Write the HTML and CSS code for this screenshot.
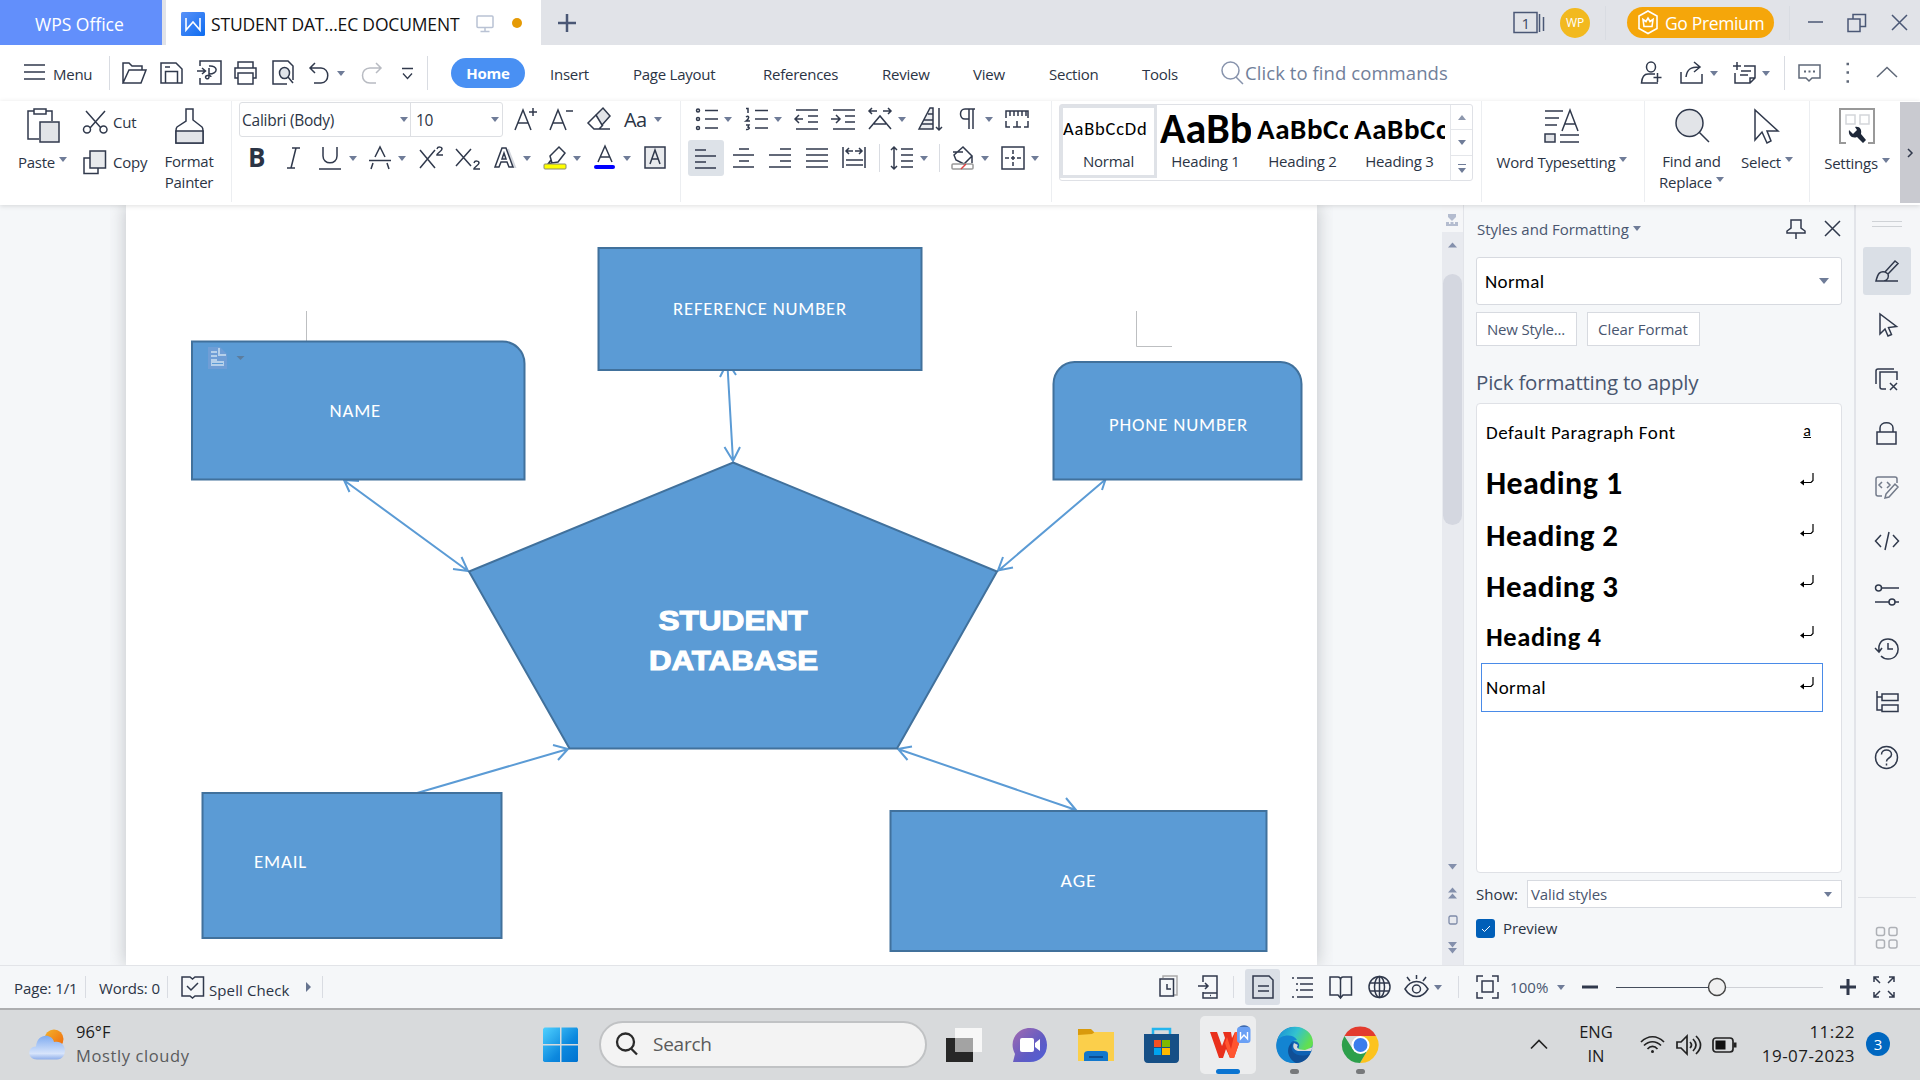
FILE: index.html
```html
<!DOCTYPE html>
<html lang="en">
<head>
<meta charset="utf-8">
<title>WPS Office - STUDENT DATABASE</title>
<link rel="stylesheet" href="styles.css">
</head>
<body>
<div class="app">

<header class="titlebar">
  <div class="tab-home">WPS Office</div>
  <div class="tab-doc">
    <svg class="logo" width="24" height="24" viewBox="0 0 24 24"><defs><linearGradient id="wl" x1="0" y1="0" x2="1" y2="1"><stop offset="0" stop-color="#5a92f8"/><stop offset="1" stop-color="#0d6cf0"/></linearGradient></defs><rect width="24" height="24" rx="1.5" fill="url(#wl)"/><path d="M5 6v12l7-8 7 8V6" fill="none" stroke="#fff" stroke-width="1.6"/></svg>
    <span class="doc-name">STUDENT DAT...EC DOCUMENT</span>
    <svg class="i monitor" width="18" height="18" viewBox="0 0 18 18"><rect x="1" y="1" width="16" height="11.500" rx="1"/><path d="M9 12.500v4M4.500 16.500h9"/></svg>
    <span class="dirty"></span>
  </div>
  <svg class="i plus" width="18" height="18" viewBox="0 0 18 18"><path d="M9 0v18M0 9h18"/></svg>
  <div class="title-right">
    <svg class="i slate" width="32" height="24" viewBox="0 0 32 24"><rect x="1" y="1.500" width="23" height="20"/><path d="M26.500 3v18M30.500 6v14"/><text x="8.500" y="17.500">1</text></svg>
    <span class="avatar">WP</span><span class="vsep"></span>
    <span class="premium"><svg class="i" width="22" height="25" viewBox="0 0 22 25"><path d="M11 1l9 5v12.500l-9 5-9-5V6zM6 9.500l3 2L11 8l2 3.500 3-2-1 7H7z"/></svg>Go Premium</span>
    <span class="vsep"></span>
    <svg class="i slate" width="16" height="16" viewBox="0 0 16 16"><path d="M0 7h15"/></svg>
    <svg class="i slate" width="20" height="20" viewBox="0 0 20 20"><rect x="0" y="6" width="12" height="12.500"/><path d="M5 6V1.500h12.500v12H12"/></svg>
    <svg class="i slate" width="17" height="17" viewBox="0 0 17 17"><path d="M1 1l15 15M16 1L1 16"/></svg>
  </div>
</header>

<nav class="menubar">
  <svg class="i" width="22" height="18" viewBox="0 0 22 18"><path d="M1 1h21M1 8h21M1 15h21"/></svg>
  <span>Menu</span><span class="vsep"></span>
  <svg class="i" width="26" height="24" viewBox="0 0 26 24"><path d="M1 22V2h6l3 3h10v4M1 22l6-13h17l-5 13z"/></svg>
  <svg class="i" width="24" height="24" viewBox="0 0 24 24"><path d="M1 2h15l6 6v14H1zM5.500 22V10.500h12V22M5 6h5"/></svg>
  <svg class="i" width="25" height="26" viewBox="0 0 25 26"><path d="M3 6V1h21v23H3v-6M0 11h8M5 8l3.500 3L5 14M12 6c9-1 10 8 0 8v-3M12 8v9c0 3-5 2-3-1 2-1 5-1 5 1"/></svg>
  <svg class="i" width="24" height="24" viewBox="0 0 24 24"><path d="M4 7V1h15v6M4 17H1V7h21v10h-3"/><rect x="4" y="12" width="15" height="11"/></svg>
  <svg class="i" width="24" height="26" viewBox="0 0 24 26"><path d="M15 24H1V1h15l5 5v14"/><ellipse cx="12.500" cy="13" rx="5" ry="5.500" fill="#dfe3e9"/><path d="M16 17l5 6"/></svg>
  <svg class="i" width="22" height="24" viewBox="0 0 22 24"><path d="M6 2L1 7l5 5M1 7h11c9 0 9 15 0 15H5"/></svg>
  <b class="caret"></b>
  <svg class="i faint" width="22" height="24" viewBox="0 0 22 24"><path d="M15 2l5 5-5 5M20 7H9C-1 7-1 22 9 22h6"/></svg>
  <svg class="i" width="14" height="14" viewBox="0 0 14 14"><path d="M0 2.500h11M1 7.500l4.500 5 4.500-5" stroke-width="1.3"/></svg>
  <span class="vsep"></span>
  <span class="home">Home</span><span>Insert</span><span>Page Layout</span><span>References</span><span>Review</span><span>View</span><span>Section</span><span>Tools</span>
  <svg class="i search-ic" width="24" height="24" viewBox="0 0 24 24"><circle cx="9.500" cy="9.500" r="8.500"/><path d="M15 16l7 7"/></svg>
  <span class="find">Click to find commands</span>
  <svg class="i" width="24" height="24" viewBox="0 0 24 24"><ellipse cx="11" cy="6" rx="4.500" ry="5"/><path d="M15 13H8c-4 0-6 3-6.500 9H18M17.500 12v9M13.500 16.500h8"/></svg>
  <svg class="i" width="25" height="24" viewBox="0 0 25 24"><path d="M1 11v11h21v-9M6 16C7 8 11 6 19 6M14 1l6 5-6 5"/></svg>
  <b class="caret"></b>
  <svg class="i" width="24" height="24" viewBox="0 0 24 24"><path d="M4 1v8M0 5h8M11 5h11v12l-5 5H2V12M17 22v-5h5M8 10h10M7 14h8"/></svg>
  <b class="caret"></b><span class="vsep"></span>
  <svg class="i soft" width="23" height="20" viewBox="0 0 23 20"><path d="M1 2h21v13H14l-3 3-3-3H1z"/><path d="M6 8.500h2M10.500 8.500h2M15 8.500h2" stroke-width="2"/></svg>
  <svg class="i soft" width="14" height="22" viewBox="0 0 14 22"><path d="M6.500 2h2.500M6.500 10.500h2.500M6.500 19.500h2.500" stroke-width="2.500"/></svg>
  <svg class="i soft" width="22" height="12" viewBox="0 0 22 12"><path d="M0 10L10 .5 20 10"/></svg>
</nav>

<section class="ribbon">
  <div class="group clipboard">
    <div class="big"><svg class="i" width="34" height="36" viewBox="0 0 34 36"><path d="M12 31H1V3h6M19 3h6v10"/><rect x="7" y="1" width="12" height="5"/><rect x="13" y="14" width="19" height="20" fill="#e2e4e8"/></svg><span>Paste<b class="caret"></b></span></div>
    <div class="stack">
      <span><svg class="i" width="25" height="24" viewBox="0 0 25 24"><path d="M3 1l15 17M22 1L7 18"/><circle cx="4" cy="19.500" r="3.500"/><circle cx="20.500" cy="19.500" r="3.500"/></svg>Cut</span>
      <span><svg class="i" width="25" height="25" viewBox="0 0 25 25"><path d="M7 8H1v15.500h14V18"/><rect x="7" y="1" width="15.500" height="17" fill="#e8eaed"/></svg>Copy</span>
    </div>
    <div class="big painter"><svg class="i" width="30" height="37" viewBox="0 0 30 37"><path d="M11 1h7v11l9 7c1 1 1 2 1 4v12H1V23c0-2 0-3 1-4l9-6z"/><path d="M1 23h27v12H1z" fill="#e2e4e8"/></svg><span>Format<br>Painter</span></div>
  </div>

  <div class="group font">
    <div class="row r-font1">
      <div class="fontbox"><span>Calibri (Body)</span><b class="caret"></b><i></i><span>10</span><b class="caret"></b></div>
      <svg class="i" width="24" height="24" viewBox="0 0 24 24"><path d="M0 23L8 3l8 20M3 16h10M18 1v8M14 5h8"/></svg>
      <svg class="i" width="25" height="24" viewBox="0 0 25 24"><path d="M0 23L8 3l8 20M3 16h10M16 4h7"/></svg>
      <svg class="i" width="26" height="24" viewBox="0 0 26 24"><path d="M9 8l7-7 7 8-8 9z" fill="#e2e4e8"/><path d="M9 8l-8 8 6 6h5l4-4M7 22h16"/></svg>
      <span class="glyph">Aa</span><b class="caret"></b>
    </div>
    <div class="row r-font2">
      <span class="bold">B</span>
      <svg class="i" width="14" height="24" viewBox="0 0 14 24"><path d="M4 2h8M-1 22h8M8 2L3 22"/></svg>
      <svg class="i" width="24" height="24" viewBox="0 0 24 24"><path d="M4 1v9c0 9 14 9 14 0V1M0 23h22"/></svg><b class="caret"></b>
      <svg class="i" width="23" height="24" viewBox="0 0 23 24"><path d="M6 11l5-10 5 10M0 14.500h22M4 17l-2 6M18 17l2 6"/></svg><b class="caret"></b>
      <svg class="i" width="25" height="24" viewBox="0 0 25 24"><path d="M1 4l15 18M16 4L1 22M18 3c1-3 5-2 5 0 0 2-5 4-5 6h6"/></svg>
      <svg class="i" width="26" height="24" viewBox="0 0 26 24"><path d="M1 3l15 17M16 3L1 20M19 17c1-3 5-2 5 0 0 2-5 4-5 6h6"/></svg>
      <svg class="i" width="22" height="24" viewBox="0 0 22 24"><path d="M13 3l7 18h-2" stroke="#d5d8de" stroke-width="2"/><path d="M0 21L7 2h4l7 19h-4l-2-5H6l-2 5zM7 13h4l-2-6z"/></svg><b class="caret"></b>
      <svg class="i" width="24" height="26" viewBox="0 0 24 26"><path d="M7 11l9-9 6 6-7 9-6 1zM7 11l2 7-4 1 3-4"/><rect x="1" y="19" width="22" height="5" rx="1" fill="#ff0" stroke="#8a8a70" stroke-width="1"/></svg><b class="caret"></b>
      <svg class="i" width="22" height="26" viewBox="0 0 22 26"><path d="M4 17l7-16 7 16M6 12h10"/><rect x="0" y="20" width="21" height="4" rx="2" fill="#00f" stroke="none"/></svg><b class="caret"></b>
      <svg class="i" width="22" height="24" viewBox="0 0 22 24"><rect x="0" y="1" width="20" height="21" fill="#e8eaed"/><path d="M5 18l5-14 5 14M7 13h6"/></svg>
    </div>
  </div>

  <div class="group para">
    <div class="row r-para1">
      <svg class="i" width="24" height="24" viewBox="0 0 24 24"><path d="M10 3.500h13M10 12h13M10 21h13"/><circle cx="3" cy="3.500" r="1.500"/><circle cx="3" cy="12" r="1.500"/><circle cx="3" cy="21" r="1.500"/></svg><b class="caret"></b>
      <svg class="i" width="24" height="24" viewBox="0 0 24 24"><path d="M10 3.500h13M10 12h13M10 21h13M1 1.500h2V6M1 10c3-2 4 1 0 4h4M1 18h3l-1 2c3 1 0 3-2 2.500"/></svg><b class="caret"></b>
      <svg class="i" width="25" height="24" viewBox="0 0 25 24"><path d="M2 3h22M14 9h10M14 15h10M2 22h22M1 12h8M5 8l-4 4 4 4"/></svg>
      <svg class="i" width="25" height="24" viewBox="0 0 25 24"><path d="M2 3h22M14 9h10M14 15h10M2 22h22M0 12h8M5 8l4 4-4 4"/></svg>
      <svg class="i" width="25" height="24" viewBox="0 0 25 24"><path d="M1 22L12 9l11 13M6 17h12M1 4h8M4 1L1 4l3 3M15 4h8M20 1l3 3-3 3"/></svg><b class="caret"></b>
      <svg class="i" width="25" height="25" viewBox="0 0 25 25"><path d="M1 22L12 1h3v21zM6 13h9M4 17h11M10 7h5" fill="#eceef1"/><path d="M21 1v22M18 20l3 3 3-3"/></svg>
      <svg class="i" width="17" height="24" viewBox="0 0 17 24"><path d="M9 12H5C-1 12-1 2 5 2h10M9 2v20M13 2v20"/></svg><b class="caret"></b>
      <svg class="i" width="25" height="20" viewBox="0 0 25 20"><path d="M1 9V2h22v7M5 2v5M9 2v5M13 2v5M17 2v5M21 2v5M1 12v6h4M8 18h8M12 12v6M23 12v6h-4"/></svg>
    </div>
    <div class="row r-para2">
      <span class="on"><svg class="i" width="23" height="22" viewBox="0 0 23 22"><path d="M1 2h11M1 8h21M1 14h11M1 20h21"/></svg></span>
      <svg class="i" width="23" height="22" viewBox="0 0 23 22"><path d="M6 2h10M0 8h21M6 14h10M0 20h21"/></svg>
      <svg class="i" width="23" height="22" viewBox="0 0 23 22"><path d="M11 2h11M0 8h22M11 14h11M0 20h22"/></svg>
      <svg class="i" width="23" height="22" viewBox="0 0 23 22"><path d="M0 2h22M0 8h22M0 14h22M0 20h22"/></svg>
      <svg class="i" width="25" height="24" viewBox="0 0 25 24"><path d="M1 1v21M23 1v21M4 5h7M7 2L4 5l3 3M13 5h7M17 2l3 3-3 3M4 14h17M4 19h17"/></svg>
      <span class="vsep"></span>
      <svg class="i" width="24" height="24" viewBox="0 0 24 24"><path d="M4 1v22M1 4l3-3 3 3M1 20l3 3 3-3M11 3h12M11 9h12M11 15h12M11 21h12"/></svg><b class="caret"></b>
      <span class="vsep"></span>
      <svg class="i" width="25" height="26" viewBox="0 0 25 26"><path d="M3 10l9-8 9 9-8 8-8-4zM2 7h10M21 11v7"/><rect x="1" y="19" width="21" height="5" rx="1" stroke="#999"/><path d="M10 24l5-5" stroke="#e04040"/></svg><b class="caret"></b>
      <svg class="i" width="24" height="24" viewBox="0 0 24 24"><rect x="1" y="1" width="22" height="22"/><path d="M12 4v16M4 12h16" stroke-dasharray="4 2"/></svg><b class="caret"></b>
    </div>
  </div>

  <div class="group styles">
    <div class="gallery">
      <div class="st sel"><span class="s0">AaBbCcDd</span><em>Normal</em></div>
      <div class="st"><span class="s1">AaBb</span><em>Heading 1</em></div>
      <div class="st"><span class="s2">AaBbCc</span><em>Heading 2</em></div>
      <div class="st"><span class="s2">AaBbCc</span><em>Heading 3</em></div>
      <div class="spin"><span><b class="caret up"></b></span><span><b class="caret"></b></span><span><i></i><b class="caret"></b></span></div>
    </div>
  </div>

  <div class="group word"><div class="big"><svg class="i" width="36" height="36" viewBox="0 0 36 36"><path d="M1 3h18M1 10h14M1 17h12"/><path d="M18 23L26 2l8 21M21 16h10"/><rect x="1" y="26" width="10" height="8" fill="#e2e4e8"/><path d="M16 27h19M16 34h19"/></svg><span>Word Typesetting<b class="caret"></b></span></div></div>

  <div class="group find-g">
    <div class="big two"><svg class="i" width="36" height="36" viewBox="0 0 36 36"><circle cx="14.500" cy="15" r="13.500" fill="#e2e4e8"/><path d="M24 24l10 10"/></svg><span>Find and<br>Replace<b class="caret"></b></span></div>
    <div class="big"><svg class="i" width="28" height="36" viewBox="0 0 28 36"><path d="M2 2v30l7-8 5 11 4-2-4-10h11z"/></svg><span>Select<b class="caret"></b></span></div>
  </div>

  <div class="group set-g"><div class="big"><svg class="i" width="37" height="37" viewBox="0 0 37 37"><path d="M7 35H1V1h34v34h-6" stroke="#999" stroke-width="2"/><path d="M7 7h9v9H7zM21 7h9v9h-9z" stroke="#d4d6da"/><path d="M10 22l4 4 4-4-2-3c5-1 7 3 6 7l5 6-3 3-6-6c-5 2-9-2-8-7z" fill="#1d2738" stroke="none"/></svg><span>Settings<b class="caret"></b></span></div></div>
  <div class="more"><svg class="i" width="6" height="10" viewBox="0 0 6 10"><path d="M1 1l4 4-4 4"/></svg></div>
</section>

<main class="workspace">
  <div class="desk"><div class="page"></div>
    <svg class="diagram" width="1192" height="760" viewBox="126 205 1192 760">
      <g stroke="#bdbfc1" fill="none"><path d="M306.500 311v30M1136.500 311v35.500h35.500"/></g>
      <g class="lines">
        <path d="M727.500 366L733 461M720 377l7.500-15 8.500 13M724.500 447l8.500 14 7-14"/>
        <path d="M345 481l123 90M349.500 492l-5.500-12 15 1M461.500 557l6.500 14-15-2"/>
        <path d="M1106 479L998 571M1102 490l4-12M1003 557l-5 13.500 15-3"/>
        <path d="M412 794.500l156-45.500M553 745l15 4-10 11"/>
        <path d="M898 749l178 61M912 746.500l-14 2.500 9.500 11M1066 798l10 12-14 1.500"/>
      </g>
      <g class="shapes">
        <path d="M192 341.500H502a22 22 0 0 1 22.500 22V479.500H192z"/>
        <rect x="598.500" y="248" width="323" height="122"/>
        <path d="M1053.500 479.500V384a21 22 0 0 1 21-22H1280.500a21 22 0 0 1 21 22V479.500z"/>
        <path d="M733 462.500L997 571.500 897 748.500H569.500L469 571.500z"/>
        <rect x="202.500" y="793" width="299" height="145"/>
        <rect x="890.500" y="811" width="376" height="140"/>
      </g>
      <g class="labels">
        <text x="329.500" y="417" textLength="51.500" lengthAdjust="spacingAndGlyphs">NAME</text>
        <text x="673" y="315" textLength="174" lengthAdjust="spacingAndGlyphs">REFERENCE NUMBER</text>
        <text x="1109" y="431" textLength="139" lengthAdjust="spacingAndGlyphs">PHONE NUMBER</text>
        <text x="254" y="868" textLength="53" lengthAdjust="spacingAndGlyphs">EMAIL</text>
        <text x="1060.500" y="887" textLength="36" lengthAdjust="spacingAndGlyphs">AGE</text>
      </g>
      <g class="big-label">
        <text x="658.500" y="630" textLength="149" lengthAdjust="spacingAndGlyphs">STUDENT</text>
        <text x="649" y="670" textLength="169" lengthAdjust="spacingAndGlyphs">DATABASE</text>
      </g>
      <path d="M208 347h12l7 7v15h-19z" fill="#6f9ed6"/><path d="M211 352h6M211 356h6M211 360h6M219 348v7h7" stroke="#b5d0ea" stroke-width="2" fill="none"/><path d="M211 361h13v5h-13z" fill="#b5d0ea"/><path d="M212 363.500h11" stroke="#5b9bd5"/><path d="M236.500 356h8l-4 4z" fill="#5c7d9e"/>
    </svg>
  </div>
  <div class="scroll">
    <svg width="12" height="13" viewBox="0 0 12 13" fill="#b4bccf"><path d="M2 0h8v3L6 7 2 3zM0 8h3v2h1.500V8h3v2H9V8h3v4H0z"/></svg>
    <div class="track">
      <svg class="up" width="9" height="6" viewBox="0 0 9 6"><path d="M0 5.500h9L4.500.5z"/></svg>
      <div class="thumb"></div>
      <svg width="9" height="6" viewBox="0 0 9 6"><path d="M0 0h9L4.500 5.500z"/></svg>
      <svg width="9" height="12" viewBox="0 0 9 12"><path d="M0 5.500h9L4.500.5zM0 11.500h9L4.500 6.500z"/></svg>
      <svg width="10" height="10" viewBox="0 0 10 10"><rect x="1" y="1" width="8" height="8" rx="1.500" fill="none" stroke="#7d8aa8" stroke-width="1.300"/></svg>
      <svg width="9" height="12" viewBox="0 0 9 12"><path d="M0 0h9L4.500 5.500zM0 6h9l-4.500 5.500z"/></svg>
    </div>
  </div>

  <aside class="panel">
    <div class="panel-head"><span>Styles and Formatting</span><b class="caret"></b>
      <svg class="i" width="20" height="20" viewBox="0 0 20 20"><path d="M5 1h10v8l4 3v2H1v-2l4-3zM10 14v6"/></svg>
      <svg class="i" width="17" height="17" viewBox="0 0 17 17"><path d="M1 1l15 15M16 1L1 16"/></svg></div>
    <div class="select-lg">Normal<b class="caret wide"></b></div>
    <div class="btns"><span>New Style...</span><span>Clear Format</span></div>
    <h2>Pick formatting to apply</h2>
    <ul>
      <li>Default Paragraph Font<u>a</u></li>
      <li class="h1">Heading 1<svg width="14" height="13" viewBox="0 0 14 13"><path d="M13 0v7.500l-2 2H3"/><path d="M0 9.500l4-3v6z"/></svg></li>
      <li class="h2">Heading 2<svg width="14" height="13" viewBox="0 0 14 13"><path d="M13 0v7.500l-2 2H3"/><path d="M0 9.500l4-3v6z"/></svg></li>
      <li class="h2">Heading 3<svg width="14" height="13" viewBox="0 0 14 13"><path d="M13 0v7.500l-2 2H3"/><path d="M0 9.500l4-3v6z"/></svg></li>
      <li class="h4">Heading 4<svg width="14" height="13" viewBox="0 0 14 13"><path d="M13 0v7.500l-2 2H3"/><path d="M0 9.500l4-3v6z"/></svg></li>
      <li class="cur">Normal<svg width="14" height="13" viewBox="0 0 14 13"><path d="M13 0v7.500l-2 2H3"/><path d="M0 9.500l4-3v6z"/></svg></li>
    </ul>
    <div class="show"><span>Show:</span><div>Valid styles<b class="caret"></b></div></div>
    <div class="preview"><svg width="19" height="19" viewBox="0 0 19 19"><rect width="19" height="19" rx="3" fill="#005fb8"/><path d="M6 10l2.500 2.500L14 7" fill="none" stroke="#fff"/></svg>Preview</div>
  </aside>

  <aside class="rail">
    <div class="grip"></div>
    <span class="on"><svg class="i" viewBox="0 0 24 24"><path d="M10 13l10-11 3 2.500L13 15M10 13c-5-1-7 1-9 9h8c4-1 5-4 4-7zM9 22h14"/></svg></span>
    <span><svg class="i" viewBox="0 0 24 24"><path d="M5 1v20l5-5 3 7 3.500-1.500-3-7 8-1z"/></svg></span>
    <span><svg class="i" viewBox="0 0 24 24"><path d="M1 17V4c0-1 1-2 2-2h16M11 22H7c-1 0-2-1-2-2V5h17v8M15 16l7 7M22 16l-7 7"/></svg></span>
    <span><svg class="i" viewBox="0 0 24 24"><path d="M2 11h19v12H2zM5 11V7c0-7 13-7 13 0v4"/></svg></span>
    <span><svg class="i soft" viewBox="0 0 24 24"><path d="M22 8V4c0-1-1-2-2-2H3C2 2 1 3 1 4v15c0 1 1 2 2 2h4M7 7l-3 3 3 3M12 7l3 3-3 3M11 19l9-10 3 3-9 10-4 1z"/></svg></span>
    <span><svg class="i" viewBox="0 0 24 24"><path d="M6 6l-5.500 6L6 18M18 6l5.500 6L18 18M14 3l-4 18"/></svg></span>
    <span><svg class="i" viewBox="0 0 24 24"><circle cx="3.500" cy="5" r="3"/><path d="M7 5h17M0 19h14M20 19h4"/><circle cx="17" cy="19" r="3"/></svg></span>
    <span><svg class="i" viewBox="0 0 24 24"><path d="M4 14C3 6 7 2 13 2c13 0 14 20 0 20-3 0-5-1-7-3M0 11l4 4 3-4M13 6v6h5"/></svg></span>
    <span><svg class="i" viewBox="0 0 24 24"><path d="M2 0v19h5M2 6h5"/><rect x="7" y="3" width="16" height="6.500"/><rect x="7" y="14" width="16" height="6.500"/></svg></span>
    <span><svg class="i" viewBox="0 0 24 24"><circle cx="11.500" cy="12.500" r="11"/><path d="M6.500 9.500c0-6 10-6 10 0 0 4-5 3-5 7M11.500 18.500v2"/></svg></span>
    <span class="apps"><svg class="i" viewBox="0 0 24 24"><rect x="1.500" y="1.500" width="8" height="8" rx="2"/><rect x="14" y="1.500" width="8" height="8" rx="2"/><rect x="1.500" y="14" width="8" height="8" rx="2"/><rect x="14" y="14" width="8" height="8" rx="2"/></svg></span>
  </aside>
</main>

<footer class="status">
  <span>Page: 1/1</span><i class="vsep"></i><span>Words: 0</span><i class="vsep"></i>
  <svg class="i" width="24" height="24" viewBox="0 0 24 24"><path d="M1 2h8l2.500 2L14 2h8.500v19H14l-2.500 2L9 21H1zM6 11l4 4 7-7"/></svg>
  <span class="spell">Spell Check</span>
  <svg width="6" height="10" viewBox="0 0 6 10"><path d="M0 0l5 5-5 5z" fill="#66748f"/></svg><i class="vsep"></i>
  <svg class="i" width="20" height="24" viewBox="0 0 20 24"><path d="M4 3V1h14v19h-3" stroke="#aaa"/><path d="M1 4h13.500v17H1zM8 9v5h4"/></svg>
  <svg class="i" width="21" height="24" viewBox="0 0 21 24"><path d="M5 7V1h14v22H5v-6M0 11h10M7 8l3 3-3 3M5 18h14M12 20.500h1"/></svg>
  <i class="vsep"></i>
  <span class="on"><svg class="i" width="23" height="24" viewBox="0 0 23 24"><path d="M1 1h16l4 4v18H1zM6 11h11M6 16h11"/></svg></span>
  <svg class="i" width="22" height="24" viewBox="0 0 22 24"><path d="M5 3h16M8 9h13M8 15h13M5 22h16M0 3h2M4 9h2M4 15h2M0 22h2"/></svg>
  <svg class="i" width="24" height="24" viewBox="0 0 24 24"><path d="M1 2h8c2 0 2.500 1 2.500 3C11.500 3 12 2 14 2h8.500v18H14l-2.500 3L9 20H1zM11.500 5v17"/></svg>
  <svg class="i" width="24" height="24" viewBox="0 0 24 24"><circle cx="11.500" cy="12" r="10.500"/><ellipse cx="11.500" cy="12" rx="5" ry="10.500"/><path d="M11.500 1v22M2 8h19M2 16h19"/></svg>
  <svg class="i" width="26" height="26" viewBox="0 0 26 26"><path d="M0 15c6-10 17-10 23 0-6 10-17 10-23 0zM11.500 1v4M2 3l3 4M21 3l-3 4"/><circle cx="11.500" cy="15" r="4"/></svg>
  <b class="caret"></b><i class="vsep"></i>
  <svg class="i" width="23" height="24" viewBox="0 0 23 24"><path d="M1 7V1h6M16 1h6v6M22 17v6h-6M7 23H1v-6M6 6h11v11H6z"/></svg>
  <span class="pct">100%</span><b class="caret"></b>
  <svg class="i thick" width="17" height="16" viewBox="0 0 17 16"><path d="M0 8h16"/></svg>
  <svg width="208" height="20" viewBox="0 0 208 20"><path d="M0 10.500h100" stroke="#454d5c"/><path d="M100 10.500h107" stroke="#cfd1d6"/><circle cx="101" cy="10" r="8.500" fill="#f0f0f0" stroke="#444" stroke-width="1.400"/></svg>
  <svg class="i thick" width="17" height="16" viewBox="0 0 17 16"><path d="M0 8h16M8 0v16"/></svg>
  <svg class="i" width="22" height="24" viewBox="0 0 22 24"><path d="M0 7V2h5M0 2l6 6M15 2h5v5M20 2l-6 6M20 17v5h-5M20 22l-6-6M5 22H0v-5M0 22l6-6"/></svg>
</footer>

<div class="taskbar">
  <svg width="37" height="32" viewBox="0 0 37 32"><defs><linearGradient id="cl" x1="0" y1="0" x2="0" y2="1"><stop offset="0" stop-color="#7fabf0"/><stop offset=".75" stop-color="#d7e4fb"/><stop offset="1" stop-color="#8eaeea"/></linearGradient><linearGradient id="sn" x1="0" y1="0" x2="1" y2="1"><stop offset="0" stop-color="#f3b42c"/><stop offset="1" stop-color="#f0650a"/></linearGradient></defs><circle cx="25" cy="10" r="9.500" fill="url(#sn)"/><path d="M8 30.500c-10 0-10-13-1-13C8 4 23 4 25 13c13-3 15 17 3 17.500z" fill="url(#cl)"/></svg>
  <div class="weather"><span>96°F</span><span>Mostly cloudy</span></div>
  <svg width="36" height="36" viewBox="0 0 36 36"><defs><linearGradient id="wn" x1="0" y1="0" x2="1" y2="1"><stop offset="0" stop-color="#4fd1ff"/><stop offset=".6" stop-color="#0c88de"/><stop offset="1" stop-color="#0072d0"/></linearGradient></defs><path d="M1.500.5H17V17H0V2zM18.500.5H34l1 1.500v15H18.500zM0 18.500h17V35H1.500L0 34zM18.500 18.500H35V34l-1 1H18.500z" fill="url(#wn)"/></svg>
  <div class="search"><svg width="24" height="24" viewBox="0 0 24 24" fill="none" stroke="#2a2a2a" stroke-width="2.300"><circle cx="10.500" cy="10" r="8.500"/><path d="M16 16.500l6 6"/></svg>Search</div>
  <svg width="37" height="36" viewBox="0 0 37 36"><path d="M0 11h27v24H0z" fill="#272727"/><path d="M9 1h27v24H9z" fill="#f7f7f7"/><path d="M9 11h18v14H9z" fill="#a3a3a3"/></svg>
  <svg width="36" height="36" viewBox="0 0 36 36"><defs><linearGradient id="tm" x1="0" y1="0" x2="1" y2="1"><stop offset="0" stop-color="#a46ab0"/><stop offset=".6" stop-color="#5f5bc4"/><stop offset="1" stop-color="#4d5fd8"/></linearGradient></defs><path d="M18 1c10 0 17 7 17 17s-7 17-17 17H1l2-8C-4 14 5 1 18 1z" fill="url(#tm)"/><rect x="8" y="11" width="14" height="14" rx="2" fill="#fff"/><path d="M23 16l5-4v12l-5-4z" fill="#fff"/></svg>
  <svg width="37" height="36" viewBox="0 0 37 36"><path d="M0 2h13l4 4h-1v10H0z" fill="#d99a0c"/><path d="M0 8l14-1 3-2h19v29H0z" fill="#fbcf4b"/><path d="M6 34v-7c0-2 2-3 4-3h16c3 0 4 1 4 3v7z" fill="#1277cc"/><path d="M11 30h14" stroke="#0b4d92" stroke-width="2"/></svg>
  <svg width="36" height="37" viewBox="0 0 36 37"><path d="M9 8V2h17v6" fill="none" stroke="#23b5ee" stroke-width="2.500"/><path d="M0 7h35v25c0 2-1 4-4 4H4c-3 0-4-2-4-4z" fill="#164f86"/><path d="M10 13h7v7h-7z" fill="#f25022"/><path d="M18 13h8v7h-8z" fill="#7fba00"/><path d="M10 21h7v7h-7z" fill="#00a4ef"/><path d="M18 21h8v7h-8z" fill="#ffb900"/></svg>
  <div class="tile"><svg width="44" height="40" viewBox="0 0 44 40"><path d="M0 11h7l5 14 3-8-2-6h8l1 6 3-6h8L24 37h-4l-4-9-3 9H9z" fill="#e9301c"/><path d="M25 11h8l-9 26h-4l-5-15 2-6 4 12z" fill="#ff5530"/><path d="M28 8c1-5 11-5 12 0z" fill="#3f6bb0"/><rect x="27" y="6" width="13.500" height="16" rx="3" fill="#6aa0f5"/><path d="M30.500 11v7l3.500-4 3.500 4v-7" fill="none" stroke="#fff" stroke-width="1.400"/></svg></div>
  <div class="running"><svg width="38" height="38" viewBox="0 0 38 38"><defs><linearGradient id="eg" x1="0" y1="0" x2="1" y2=".4"><stop offset="0" stop-color="#1689d8"/><stop offset=".55" stop-color="#33c2cf"/><stop offset="1" stop-color="#62df50"/></linearGradient></defs><circle cx="18.500" cy="19" r="18" fill="#0e62b4"/><path d="M1 17C3-6 37-3 37 17c0 7-10 9-15 6 3-5 0-8-5-8C9 15 3 20 1 17z" fill="url(#eg)"/><path d="M1 15c3-6 16-8 20-1-10 0-12 16 3 22C5 41-2 25 1 15z" fill="#1384d2"/><path d="M17 17c-5 8 4 16 17 11-3 6-8 9-14 9-10-5-10-18-3-20z" fill="#104f96"/><path d="M18 17c-2 4 0 7 4 8h13l2-4-8 3c-8 0-9-3-7-5z" fill="#d8dadc"/></svg></div>
  <div class="running"><svg width="38" height="38" viewBox="0 0 38 38"><path d="M2.400 10A18 18 0 0 1 34 10H18.500z" fill="#e33b2e"/><path d="M34.100 10A18 18 0 0 1 18 37l8-13.500-7.500-13.500z" fill="#fcc31e"/><path d="M2.400 10A18 18 0 0 0 18 37l8-13.500H11z" fill="#2c9f4b"/><circle cx="18.500" cy="19" r="9" fill="#fff"/><circle cx="18.500" cy="19" r="7" fill="#3b7ded"/></svg></div>
  <svg class="tray" width="18" height="11" viewBox="0 0 18 11"><path d="M0 8.500l8-8 8 8"/></svg>
  <div class="lang"><span>ENG</span><span>IN</span></div>
  <svg class="tray" width="25" height="19" viewBox="0 0 25 19"><path d="M0 6c7-7 16-7 23 0M3 9.500c5-5 12-5 17 0M6.500 13c3-3.500 7-3.500 10 0"/><circle cx="11.500" cy="15.500" r="1.500" fill="#222" stroke="none"/></svg>
  <svg class="tray" width="25" height="20" viewBox="0 0 25 20"><path d="M0 7h4l6-6v18l-6-6H0zM13 7c2 2 2 4 0 6M16 4c4 4 4 8 0 12M19 1c6 6 6 12 0 18"/></svg>
  <svg class="tray" width="25" height="18" viewBox="0 0 25 18"><rect x="0" y="2" width="20" height="14" rx="3"/><rect x="2.500" y="4.500" width="10" height="9" fill="#111" stroke="none"/><path d="M22 6.500v5" stroke-width="3"/></svg>
  <div class="clock"><span>11:22</span><span>19-07-2023</span></div>
  <span class="count">3</span>
</div>
</div>
</body>
</html>
```
FILE: styles.css
```css
* { box-sizing: border-box; }
body { margin: 0; background: #f5f6f8; font-family: "Open Sans", "Noto Sans", sans-serif; font-size: 15px; color: #2b3445; letter-spacing: -0.25px; overflow: hidden; }
.app { width: 1920px; height: 1080px; display: flex; flex-direction: column; white-space: nowrap; }
svg { display: block; flex: none; overflow: visible; }
.i { fill: none; stroke: #30394c; stroke-width: 1.5; }
.vsep { width: 1px; height: 34px; background: #d9dce2; }
.caret { display: block; width: 0; height: 0; border: 4px solid transparent; border-top: 5px solid #6f7c98; border-bottom: 0; }
.caret.up { border-top: 0; border-bottom: 5px solid #8d97ad; }
.caret.wide { border-width: 6px 5px 0; }

/* title bar */
.titlebar { height: 45px; background: #e1e3e8; display: flex; align-items: center; }
.tab-home { width: 162px; height: 45px; background: #628ffb; color: #fff; font-size: 17.5px; letter-spacing: 0; line-height: 49px; padding-left: 35px; }
.tab-doc { width: 375px; height: 45px; margin-left: 4px; background: #fff; display: grid; grid-template-columns: 30px 265px 36px 10px; align-items: center; padding: 3px 0 0 15px; }
.doc-name { font-size: 17.5px; letter-spacing: -0.17px; color: #111; }
.monitor { stroke: #b9c2d4; }
.dirty { width: 10px; height: 10px; border-radius: 5px; background: #e59a05; margin-top: -3px; }
.plus { margin-left: 17px; stroke: #4a5775; stroke-width: 2.5; }
.slate { stroke: #4a5775; }
.slate text { fill: #3b4763; stroke: none; font-size: 15px; }
.title-right { flex: 1; display: grid; grid-template-columns: 47px 45px 22px 162px 19px 40px 43px 20px; align-items: center; margin-left: 937px; }
.avatar { width: 30px; height: 30px; border-radius: 15px; background: #f2b91f; color: #fff; font-size: 12px; line-height: 30px; text-align: center; }
.premium { width: 147px; height: 31px; border-radius: 16px; background: #f5a60a; color: #fff; display: flex; align-items: center; padding-left: 10px; gap: 6px; font-size: 17.5px; letter-spacing: -0.35px; }
.premium .i { stroke: #fff; stroke-width: 1.6; }

/* menu row */
.menubar { height: 56px; background: #fff; display: grid; align-items: center; padding-left: 23px; grid-template-columns: 30px 56px 13px 38px 37px 37px 38px 37px 29px 23px 41px 25px 24px 99px 83px 130px 119px 91px 76px 93px 79px 24px 395px 40px 31px 22px 30px 21px 14px 42px 37px 43px; }
.menubar > span:not(.home):not(.vsep) { padding-top: 1px; }
.menubar > .caret { margin-left: -1px; }
.faint { stroke: #b8bbc2; }
.home { width: 74px; height: 30px; border-radius: 15px; background: #4990f3; color: #fff; font-weight: 700; line-height: 31px; text-align: center; }
.search-ic { stroke: #8793ac; }
.find { font-size: 18.5px; color: #71809a; letter-spacing: 0.07px; margin-top: -2px; }
.soft { stroke: #5f6878; }

/* ribbon */
.ribbon { height: 104px; background: #fff; display: flex; position: relative; z-index: 2; box-shadow: 0 1px 5px #0002; }
.group { height: 101px; border-right: 1px solid #eceef1; flex: none; }
.big { display: flex; flex-direction: column; align-items: center; padding-top: 7px; }
.big > span { height: 20px; margin-top: 8px; line-height: 21px; text-align: center; }
.big .caret { display: inline-block; margin-left: 4px; vertical-align: 6px; }
.clipboard { width: 232px; display: grid; grid-template-columns: 85px 68px 72px; }
.clipboard .big:first-child svg { margin-left: 3px; }
.stack > span { display: flex; height: 40px; align-items: center; gap: 5px; margin-left: -2px; }
.stack { padding-top: 1px; }
.painter svg { margin-bottom: -2px; margin-left: 2px; }
.row { display: grid; height: 36px; align-items: center; }
.font { width: 449px; padding-left: 7px; }
.r-font1 { grid-template-columns: 276px 35px 37px 37px 30px 8px; }
.fontbox { width: 264px; height: 35px; border: 1px solid #dddfe3; border-radius: 3px; display: grid; grid-template-columns: 158px 10px 6px 75px 8px; align-items: center; padding-left: 2px; }
.fontbox i { width: 1px; height: 33px; background: #dddfe3; }
.fontbox > span { font-size: 15.5px; padding-top: 1px; }
.glyph { font-size: 20px; letter-spacing: -0.6px; }
.r-font2 { margin-top: 3px; padding-left: 9px; grid-template-columns: 40px 31px 30px 20px 29px 21px 36px 40px 28px 20px 30px 21px 29px 22px 22px; }
.bold { font: 700 26px/30px "Open Sans", sans-serif; margin-top: -2px; }
.para { width: 371px; }
.r-para1 { padding-left: 14px; grid-template-columns: 29px 21px 29px 20px 37px 37px 30px 20px 42px 25px 20px 25px; }
.r-para2 { margin-top: 3px; padding-left: 7px; grid-template-columns: 45px 36px 37px 36px 37px 11px 30px 19px 12px 30px 20px 30px 8px; }
.r-para2 .on { width: 36px; height: 36px; border-radius: 3px; background: #dde2e8; padding: 8px 0 0 6px; }
.row .vsep { height: 28px; }
.styles { width: 430px; padding: 3px 0 0 7px; }
.gallery { width: 414px; height: 77px; border: 1px solid #dfe1e6; border-radius: 3px; display: grid; grid-template-columns: 97px 97px 97px 99px 22px; }
.st { height: 73px; overflow: hidden; padding-left: 3px; display: flex; flex-direction: column; }
.st.sel { border: 3px solid #dfe2e7; padding-left: 0; }
.st > span { height: 46px; width: 91px; overflow: hidden; font-family: Carlito, Lato, sans-serif; color: #000; line-height: 48px; }
.st em { font-style: normal; text-align: center; margin-top: -2px; width: 91px; height: 24px; line-height: 24px; }
.st .s0 { font-size: 18.5px; letter-spacing: 0.8px; }
.st.sel > span { height: 42px; line-height: 42px; }
.st.sel em { margin-top: -1px; }
.st .s1 { font-size: 42px; font-weight: 700; letter-spacing: 0; }
.st .s2 { font-size: 29px; font-weight: 700; letter-spacing: 0.6px; }
.spin { border-left: 1px solid #e4e6ea; display: grid; grid-template-rows: 25px 26px 25px; }
.spin span { display: flex; flex-direction: column; align-items: center; justify-content: center; border-bottom: 1px solid #e4e6ea; gap: 3px; }
.spin span:last-child { border: 0; }
.spin i { width: 8px; height: 1px; background: #6f7c98; }
.word { width: 163px; }
.word .big { margin-left: -2px; }
.find-g { width: 165px; display: grid; grid-template-columns: 89px 62px; padding-left: 2px; }
.find-g .two > span { margin-top: 7px; }
.find-g .two svg { margin-left: 2px; }
.set-g { width: 90px; border: 0; padding-left: 4px; }
.more { width: 20px; height: 101px; margin-top: 1px; background: #c9cad0; display: grid; place-items: center; }

/* document area */
.workspace { height: 760px; display: flex; }
.desk { position: relative; width: 1442px; overflow: hidden; background: #f5f7f9; }
.page { width: 1191px; height: 760px; margin-left: 126px; background: #fff; box-shadow: 0 0 16px #8a8d9480; clip-path: inset(0 -16px); }
.diagram { position: absolute; left: 126px; top: 0; }
.lines { fill: none; stroke: #5b9bd5; stroke-width: 2; }
.shapes { fill: #5b9bd5; stroke: #41719c; stroke-width: 2; }
.labels { fill: #fff; font: 400 18.5px Carlito, Lato, sans-serif; letter-spacing: 0.8px; }
.big-label { fill: #fff; stroke: #fff; stroke-width: 1.1; font: 700 28px "Liberation Sans", Arial, sans-serif; letter-spacing: 0; }
.scroll { width: 21px; flex: none; }
.scroll > svg { margin: 9px 0 5px 4px; }
.track { height: 733px; background: #e8eaef; display: flex; flex-direction: column; align-items: center; }
.track > svg { fill: #8490ac; margin-bottom: 16.5px; }
.track > svg.up { margin: 10px 0 26px; }
.thumb { width: 19px; height: 251px; flex: none; border-radius: 10px; background: #d4d7e0; margin-bottom: 339px; }
.panel { width: 391px; flex: none; border-left: 1px solid #e2e4e9; background: #f5f7f9; padding-left: 12px; color: #49566f; }
.panel-head { display: grid; grid-template-columns: 157px 153px 38px 20px; align-items: center; height: 47px; }
.panel-head > span { letter-spacing: 0; padding: 1px 0 0 1px; }
.select-lg { width: 366px; height: 48px; margin-top: 5px; background: #fff; border: 1px solid #d7dae0; border-radius: 3px; display: flex; align-items: center; justify-content: space-between; padding: 0 12px 0 8px; font: 400 19px Carlito, Lato, sans-serif; color: #000; letter-spacing: 0.3px; }
.btns { display: flex; gap: 10px; margin-top: 7px; }
.btns span { height: 34px; border: 1px solid #d7dae0; background: #fff; line-height: 32px; padding-left: 10px; width: 101px; letter-spacing: -0.2px; }
.btns span + span { width: 113px; letter-spacing: -0.05px; }
h2 { margin: 21px 0 0; height: 36px; line-height: 30px; font-weight: 400; font-size: 20.5px; letter-spacing: -0.2px; }
ul { list-style: none; width: 366px; height: 470px; margin: 0; padding: 4px 4px 0; background: #fff; border: 1px solid #dfe1e6; border-radius: 4px; color: #000; font-family: Carlito, Lato, sans-serif; }
li { width: 342px; height: 51px; display: flex; justify-content: space-between; align-items: center; padding: 0 8px 0 4px; border: 1px solid transparent; font-size: 19px; letter-spacing: 0.55px; line-height: 28px; }
li:first-child { padding-bottom: 1px; }
li svg { margin-top: -9px; fill: none; stroke: #000; stroke-width: 1.2; }
li svg path + path { fill: #000; stroke: none; }
li u { font-size: 16px; margin: -5px 3px 0 0; letter-spacing: 0; }
li.h1 { font-weight: 700; font-size: 32px; letter-spacing: 0.4px; }
li.h2 { font-weight: 700; font-size: 31px; letter-spacing: 0.4px; }
li.h4 { font-weight: 700; font-size: 26.5px; letter-spacing: 0.6px; }
li.h1, li.h2, li.h4 { padding-bottom: 1px; }
li.cur { height: 49px; border-color: #4a8be8; letter-spacing: 0.4px; }
.show { display: flex; height: 28px; margin-top: 7px; align-items: center; }
.show > span { width: 51px; color: #2b3445; letter-spacing: 0; }
.show div { width: 315px; height: 28px; background: #fff; border: 1px solid #d7dae0; display: flex; align-items: center; justify-content: space-between; padding: 0 9px 0 3px; letter-spacing: -0.1px; }
.preview { display: flex; align-items: center; height: 20px; margin-top: 10px; gap: 8px; color: #2b3445; letter-spacing: -0.1px; }
.rail { width: 66px; border-left: 2px solid #e2e4e9; display: flex; flex-direction: column; align-items: center; padding-right: 2px; }
.grip { width: 30px; height: 6px; border: solid #cfd2d6; border-width: 1px 0; margin: 16px 0 20px; flex: none; }
.rail span { width: 48px; height: 48px; flex: none; margin-bottom: 6px; border-radius: 3px; padding: 12px; }
.rail .on { background: #dadfe6; }
.rail svg { width: 24px; height: 24px; }
.rail .soft { stroke: #737b8a; }
.rail .apps { width: 58px; height: 76px; margin-top: 110px; padding: 28px 17px; border-top: 1px solid #e0e2e6; border-radius: 0; }
.apps .i { stroke: #aeb1b6; }

/* status bar */
.status { height: 45px; background: #f5f7f9; border-top: 1px solid #e2e4e8; border-bottom: 2px solid #adaeb0; display: grid; align-items: center; padding-left: 14px; grid-template-columns: 71px 14px 68px 14px 28px 97px 16px 837px 39px 35px 12px 47px 37px 39px 37px 29px 24px 18px 34px 47px 25px 34px 224px 34px 22px; }
.status > span:not(.on) { padding-top: 1px; letter-spacing: -0.1px; }
.status .vsep { height: 22px; }
.status .on { width: 35px; height: 36px; border-radius: 3px; background: #dadfe6; padding: 6px 7px; }
.status > span.spell { padding-top: 5px; letter-spacing: 0.1px; }
.status > span.pct { color: #49566f; padding-top: 0; letter-spacing: 0.1px; }
.thick { stroke-width: 3; }

/* taskbar */
.taskbar { height: 70px; background: #d8dadc; display: grid; align-items: center; padding-left: 29px; color: #1c1c1c; grid-template-columns: 47px 467px 56px 347px 66px 66px 66px 56px 76px 66px 189px 48px 62px 36px 36px 49px 104px 24px; }
.weather, .clock, .lang { display: flex; flex-direction: column; font-size: 16.500px; line-height: 24px; margin-top: -2px; }
.weather span + span { color: #5a5b5d; letter-spacing: 0.6px; }
.weather { letter-spacing: 0; }
.lang { width: 34px; align-items: center; letter-spacing: 0; }
.clock { width: 93px; align-items: flex-end; font-size: 17px; letter-spacing: 0.45px; }
.search { width: 328px; height: 47px; border: 2px solid #c0c2c4; border-radius: 24px; background: #f3f3f3; display: flex; align-items: center; padding-left: 14px; gap: 14px; font-size: 19px; color: #5a5a5a; margin-top: -2px; }
.tile, .running { height: 58px; position: relative; }
.tile { width: 56px; border-radius: 5px; background: #ecedee; padding: 5px 10px; }
.running { width: 38px; padding-top: 10px; }
.tile::after, .running::after { content: ""; position: absolute; left: 16px; bottom: 0; width: 24px; height: 5px; border-radius: 3px; background: #0a74d1; }
.running::after { left: 14px; width: 9px; background: #77797b; }
.tray { fill: none; stroke: #222; stroke-width: 1.7; }
.count { width: 24px; height: 24px; border-radius: 12px; background: #0067c0; color: #fff; font-size: 15px; line-height: 24px; text-align: center; margin-top: -2px; }
```
